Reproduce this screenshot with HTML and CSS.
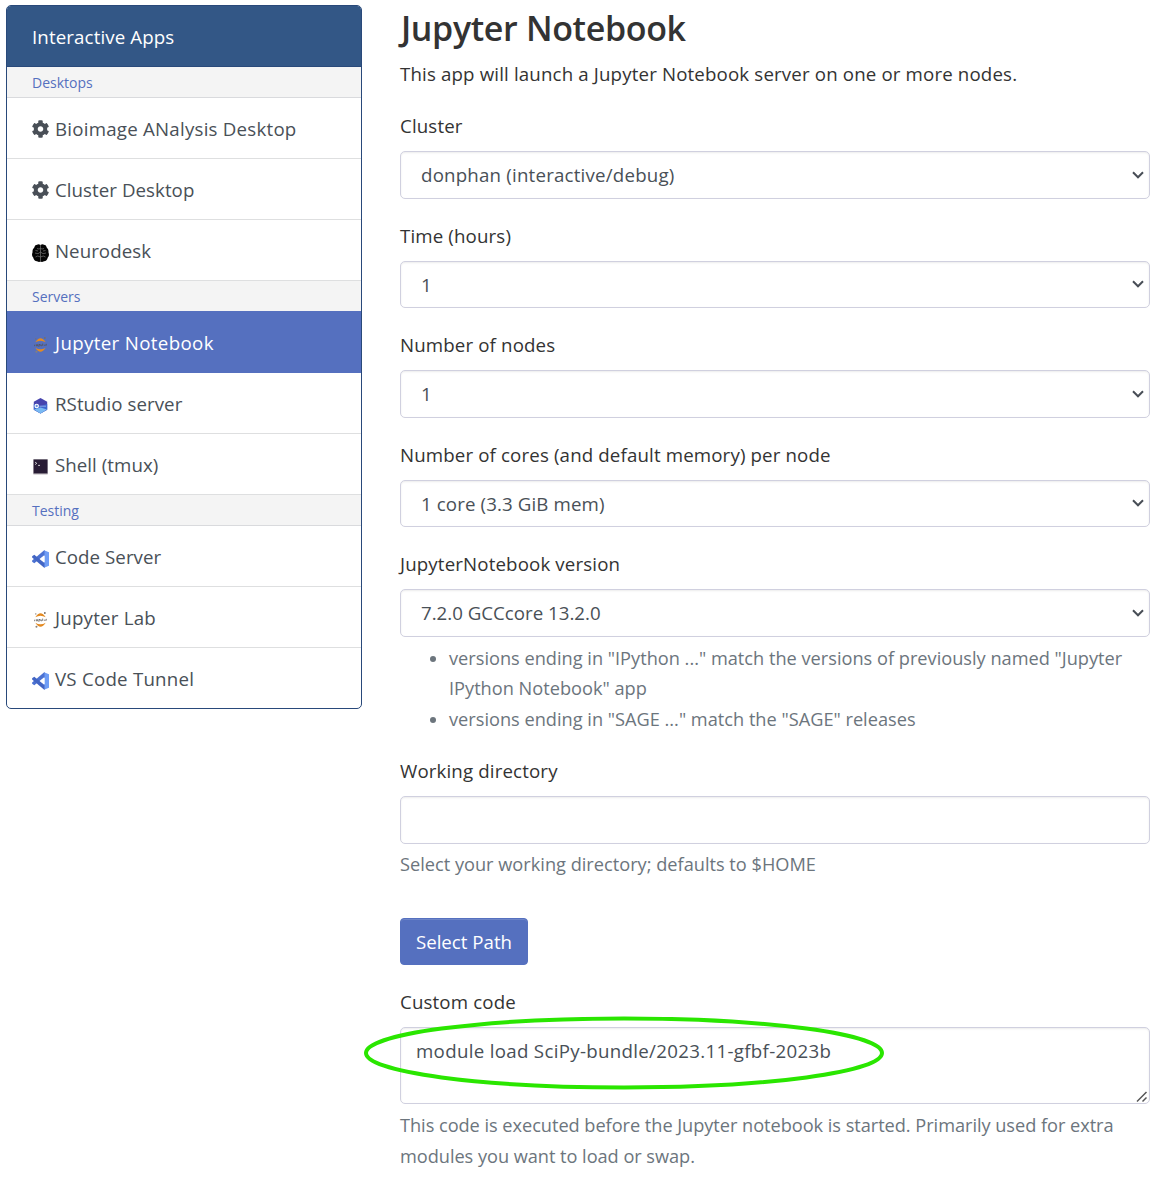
FILE: index.html
```html
<!DOCTYPE html>
<html lang="en">
<head>
<meta charset="utf-8">
<title>Jupyter Notebook</title>
<link rel="stylesheet" href="styles.css">
</head>
<body>
<svg class="defs" aria-hidden="true">
  <defs>
    <symbol id="gear" viewBox="12 8 488 496"><path fill="#494f57" d="M487.4 315.7l-42.6-24.6c4.3-23.2 4.3-47 0-70.2l42.6-24.6c4.900-2.800 7.100-8.600 5.500-14-11.100-35.600-30-67.800-54.700-94.600-3.800-4.100-10-5.100-14.800-2.300L380.800 110c-17.900-15.400-38.500-27.300-60.800-35.100V25.800c0-5.600-3.900-10.500-9.400-11.700-36.700-8.200-74.300-7.800-109.200 0-5.500 1.200-9.400 6.100-9.400 11.700V75c-22.200 7.900-42.800 19.800-60.800 35.100L88.700 85.500c-4.900-2.800-11-1.900-14.800 2.300-24.700 26.700-43.600 58.900-54.700 94.600-1.700 5.400.6 11.200 5.500 14L67.300 221c-4.300 23.200-4.300 47 0 70.200l-42.600 24.600c-4.900 2.800-7.100 8.600-5.500 14 11.100 35.600 30 67.800 54.700 94.600 3.800 4.100 10 5.100 14.800 2.300l42.600-24.600c17.900 15.400 38.500 27.300 60.800 35.100v49.200c0 5.600 3.900 10.500 9.400 11.700 36.700 8.200 74.300 7.800 109.200 0 5.500-1.200 9.400-6.100 9.400-11.700v-49.200c22.200-7.900 42.800-19.800 60.800-35.100l42.600 24.600c4.900 2.800 11 1.900 14.800-2.300 24.700-26.700 43.600-58.900 54.700-94.600 1.500-5.500-.7-11.300-5.600-14.100zM256 336c-44.100 0-80-35.900-80-80s35.900-80 80-80 80 35.900 80 80-35.900 80-80 80z"/></symbol>
    <symbol id="brain" viewBox="0 0 17 18">
      <path fill="#050505" d="M8.500 1Q6.500-.5 5 .8 2.500 1 2.300 3.500 0 5.500.6 8-.8 11.500 1.200 13.500 2 17 5 17.200 7 18.500 8.500 17.500 10 18.500 12 17.200 15 17 15.800 13.500 17.800 11.500 16.400 8 17 5.500 14.700 3.500 14.500 1 12 .8 10.500-.5 8.500 1z"/>
      <path fill="none" stroke="#777" stroke-width=".7" d="M8.500 1v16M5 4.500q2 1 3.500 0 1.500 1 3.500 0M3 9l3 .7L8.500 8l2.500 1.700 3-.7M3.500 13q2-2 5 0 3-2 5 0M6 7l-2.500-.5M11 7l2.500-.5"/>
    </symbol>
    <symbol id="jupyter" viewBox="0 0 14 17">
      <path fill="#e38a22" d="M1.500 5.600Q7-3 12.500 5.600 7 2.200 1.500 5.600zM1.500 11.400Q7 20 12.500 11.400 7 14.800 1.500 11.400z"/>
      <path fill="none" stroke="#55514f" stroke-width=".8" d="M.8 8.200v1.600M2.600 7.700v1.700h1.300V7.700M5.300 10.500V8h1.200v1.400M7.500 7.800v1.500h1M9.300 7v2.400M10.600 8.700H12M12.800 9.500V7.800h.8"/>
      <circle cx="11.600" cy="1" r="1" fill="#756e6a"/><circle cx="2" cy="2" r=".7" fill="#756e6a"/><circle cx="2.700" cy="15.600" r="1.100" fill="#8a8177"/>
    </symbol>
    <symbol id="rstudio" viewBox="0 0 14 16">
      <path fill="#4744ad" d="M7 0l6.700 3.800v8L7 15.600.3 11.800z"/>
      <path fill="#4744ad" d="M.3 3.800L7 0v8L.3 11.800z"/>
      <path fill="#3e68cf" d="M.3 6L7 8l6.700-2v5.800L7 15.600.3 11.800z"/>
      <path fill="#79b9f2" d="M.5 11.500L7 9.500l6.500 2L7 15.600z"/>
      <circle cx="3.200" cy="8" r="1.700" fill="#668ed8" stroke="#fff" stroke-width="1.100"/><path stroke="#8fa5e6" stroke-width="1" d="M6 8.200h6.500"/>
    </symbol>
    <symbol id="shell" viewBox="0 0 14 15">
      <rect width="14" height="14.500" rx=".8" fill="#b7b2b8"/><rect x=".6" y=".5" width="12.900" height="13" fill="#281c35"/>
      <path fill="none" stroke="#ddd" stroke-width=".9" d="M2 3l1.500 1.100L2 5.200M4.800 6h1.700"/>
    </symbol>
    <symbol id="code" viewBox="0 0 17 18">
      <path fill="#6f9df5" d="M12 .2l5 2v13.600l-5 2z"/>
      <path fill="#4c72d2" d="M12.500 0v5L2.300 13.200.1 11.800v-1.200z"/>
      <path fill="#4265c4" d="M.1 6.200l2.200-1.400L12.500 13v5L.1 7.400z"/>
      <path fill="#fff" d="M12.700 5.500v7L8.300 9z"/>
    </symbol>
  </defs>
</svg>
<div class="page">
  <nav class="apps">
    <div class="apps-title">Interactive Apps</div>
    <div class="group">Desktops</div>
    <a class="app"><svg class="icon gear"><use href="#gear"/></svg><span>Bioimage ANalysis Desktop</span></a>
    <a class="app tight"><svg class="icon gear"><use href="#gear"/></svg><span>Cluster Desktop</span></a>
    <a class="app tight"><svg class="icon"><use href="#brain"/></svg><span>Neurodesk</span></a>
    <div class="group before-active">Servers</div>
    <a class="app active"><svg class="icon small"><use href="#jupyter"/></svg><span>Jupyter Notebook</span></a>
    <a class="app tight"><svg class="icon small"><use href="#rstudio"/></svg><span>RStudio server</span></a>
    <a class="app tight"><svg class="icon small"><use href="#shell"/></svg><span>Shell (tmux)</span></a>
    <div class="group">Testing</div>
    <a class="app tight"><svg class="icon"><use href="#code"/></svg><span>Code Server</span></a>
    <a class="app"><svg class="icon small"><use href="#jupyter"/></svg><span>Jupyter Lab</span></a>
    <a class="app"><svg class="icon"><use href="#code"/></svg><span>VS Code Tunnel</span></a>
  </nav>
  <main class="form">
    <h1>Jupyter Notebook</h1>
    <p class="intro">This app will launch a Jupyter Notebook server on one or more nodes.</p>
    <div class="field"><label>Cluster</label><select class="control cluster"><option>donphan (interactive/debug)</option></select></div>
    <div class="field"><label>Time (hours)</label><select class="control"><option>1</option></select></div>
    <div class="field"><label>Number of nodes</label><select class="control"><option>1</option></select></div>
    <div class="field"><label>Number of cores (and default memory) per node</label><select class="control cores"><option>1 core (3.3 GiB mem)</option></select></div>
    <div class="field version"><label>JupyterNotebook version</label><select class="control"><option>7.2.0 GCCcore 13.2.0</option></select></div>
    <ul class="help">
      <li>versions ending in "IPython ..." match the versions of previously named "Jupyter<br>IPython Notebook" app</li>
      <li>versions ending in "SAGE ..." match the "SAGE" releases</li>
    </ul>
    <div class="field directory"><label>Working directory</label><input class="control" type="text"></div>
    <p class="help">Select your working directory; defaults to $HOME</p>
    <button class="path-button" type="button">Select Path</button>
    <div class="field code">
      <label>Custom code</label>
      <div class="code-box">
        <textarea class="control">module load SciPy-bundle/2023.11-gfbf-2023b</textarea>
        <svg class="grip" viewBox="0 0 12 12"><path d="M1 10.500L10.500 1M6.500 10.500l4-4" stroke="#555" stroke-width="1.500"/></svg>
        <svg class="marker" viewBox="0 0 522 76"><ellipse cx="261" cy="38" rx="258" ry="34.500" fill="none" stroke="#2ae600" stroke-width="4"/></svg>
      </div>
    </div>
    <p class="help last">This code is executed before the Jupyter notebook is started. Primarily used for extra<br>modules you want to load or swap.</p>
  </main>
</div>
</body>
</html>
```
FILE: styles.css
```css
* { box-sizing: border-box; }
body {
  margin: 0;
  background: #fff;
  color: #333;
  font: 18.7px/30.4px "Open Sans", "Noto Sans", sans-serif;
}
.defs { display: block; width: 0; height: 0; }
.page {
  display: grid;
  grid-template-columns: 356px 750px;
  column-gap: 38px;
  align-items: start;
  padding: 5px 0 0 6px;
}
.apps {
  border: 1px solid #29497a;
  border-radius: 5px;
  overflow: hidden;
  height: 704px;
}
.apps-title {
  height: 61px;
  padding: 16px 25px;
  letter-spacing: .12px;
  color: #fff;
  background: #335786;
  border-bottom: 1px solid #29497a;
}
.group {
  height: 31px;
  padding: 1px 25px 0;
  font-size: 14px;
  line-height: 30px;
  color: #5570bf;
  background: #f4f4f4;
  border-bottom: 1px solid #d9dadd;
}
.group.before-active { border-bottom: 0; height: 30px; }
.app {
  display: flex;
  align-items: center;
  gap: 6px;
  height: 61px;
  padding: 2px 0 0 25px;
  letter-spacing: .23px;
  color: #495057;
  border-bottom: 1px solid #dedfe0;
}
.app.tight { letter-spacing: .05px; }
.app:last-child { border-bottom: 0; }
.app.active { height: 62px; padding-top: 3px; letter-spacing: .36px; color: #fff; background: #5570bf; border-color: #5570bf; }
.icon { width: 17px; height: 18px; margin-top: 3px; flex: none; }
.icon.gear { margin-top: 0; }
.icon.small { width: 15px; height: 16px; margin: 3px 1px 0; }

h1 { margin: 0; height: 54px; padding: 1px 0 0 1px; font-size: 34px; line-height: 44px; font-weight: 600; letter-spacing: -.35px; }
p { margin: 0; }
.intro { height: 52px; letter-spacing: .15px; }
.field { display: flex; flex-direction: column; height: 109.5px; }
label { flex: none; height: 40px; letter-spacing: .14px; }
.control {
  display: block;
  flex: none;
  width: 100%;
  height: 47.5px;
  margin: 0;
  padding: 1px 20px 0;
  font: inherit;
  color: #495057;
  background: #fff;
  border: 1px solid #d0d0df;
  border-radius: 5px;
  box-shadow: inset 0 1px 2px rgba(0, 0, 0, .08);
  outline: 0;
}
.control.cluster { letter-spacing: .2px; }
.control.cores { letter-spacing: .12px; }
select.control {
  appearance: none;
  background: #fff url("data:image/svg+xml,%3Csvg xmlns='http://www.w3.org/2000/svg' width='12' height='8'%3E%3Cpath d='M1 1.300l5 5 5-5' fill='none' stroke='%23494f57' stroke-width='2'/%3E%3C/svg%3E") no-repeat right 5px center;
}
.field.version { height: 94px; }
.help { color: #6c757d; font-size: 18.2px; }
.help.last { letter-spacing: -.04px; }
ul.help { margin: 0; padding: 0 0 0 49px; height: 113px; }
.field.directory { height: 93px; }
.path-button {
  display: block;
  margin-top: 39px;
  width: 128px;
  height: 47px;
  padding: 0;
  font: inherit;
  color: #fff;
  background: #5570bf;
  border: 1px solid #5570bf;
  border-radius: 4px;
  box-shadow: inset 0 1px 0 rgba(255, 255, 255, .15);
}
.field.code { margin-top: 22px; height: 123px; }
.code-box { position: relative; }
textarea.control { height: 77px; padding: 8px 15px; letter-spacing: .31px; resize: none; overflow: hidden; }
.grip { position: absolute; right: 2px; bottom: 1px; width: 12px; height: 12px; }
.marker { position: absolute; left: -37px; top: -12px; width: 522px; height: 76px; pointer-events: none; }
```
